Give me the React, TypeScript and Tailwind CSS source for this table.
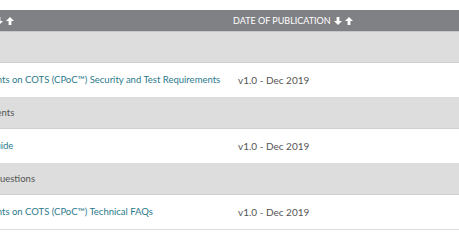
const rows = [
  {
    group: "Standards",
    title: "Contactless Payments on COTS (CPoC™) Security and Test Requirements",
    date: "v1.0 - Dec 2019",
  },
  {
    group: "Supporting Documents",
    title: "CPoC™ Program Guide",
    date: "v1.0 - Dec 2019",
  },
  {
    group: "Frequently Asked Questions",
    title: "Contactless Payments on COTS (CPoC™) Technical FAQs",
    date: "v1.0 - Dec 2019",
  },
];

const SortArrows = () => (
  <span className="inline-flex items-center gap-[3px] ml-[3px]">
    <svg width="8" height="8" viewBox="0 0 8 8" fill="white">
      <path d="M2.6 0h2.8v4H8L4 8 0 4h2.6z" />
    </svg>
    <svg width="8" height="8" viewBox="0 0 8 8" fill="white">
      <path d="M2.6 8h2.8V4H8L4 0 0 4h2.6z" />
    </svg>
  </span>
);

const App = () => {
  return (
    <div
      className="w-[459px] h-[241px] overflow-hidden bg-white pt-[10px]"
      style={{ fontFamily: "Lato, 'Open Sans', sans-serif" }}
    >
      <div className="ml-[-92px] w-[640px] text-[9.5px]">
        <div className="flex h-[22px] items-center bg-[#808184] text-white text-[9px] border-b border-[#c6c6c6]">
          <div className="w-[325px] pl-[7px] flex items-center">
            DOCUMENT TITLE
            <SortArrows />
          </div>
          <div className="flex items-center">
            DATE OF PUBLICATION
            <SortArrows />
          </div>
        </div>
        {rows.map((row) => (
          <div key={row.title}>
            <div className="flex h-[31px] items-center bg-[#dddddd] text-[#555555] border-b border-[#d0d0d0] pl-[10px]">
              {row.group}
            </div>
            <div className="flex h-[35px] items-center border-b border-[#dcdcdc]">
              <div className="w-[325px] pl-[10px] text-[#2b7a8b] whitespace-nowrap">
                {row.title}
              </div>
              <div className="pl-[5px] text-[10px] text-[#555555]">{row.date}</div>
            </div>
          </div>
        ))}
      </div>
    </div>
  );
};

export default App;
